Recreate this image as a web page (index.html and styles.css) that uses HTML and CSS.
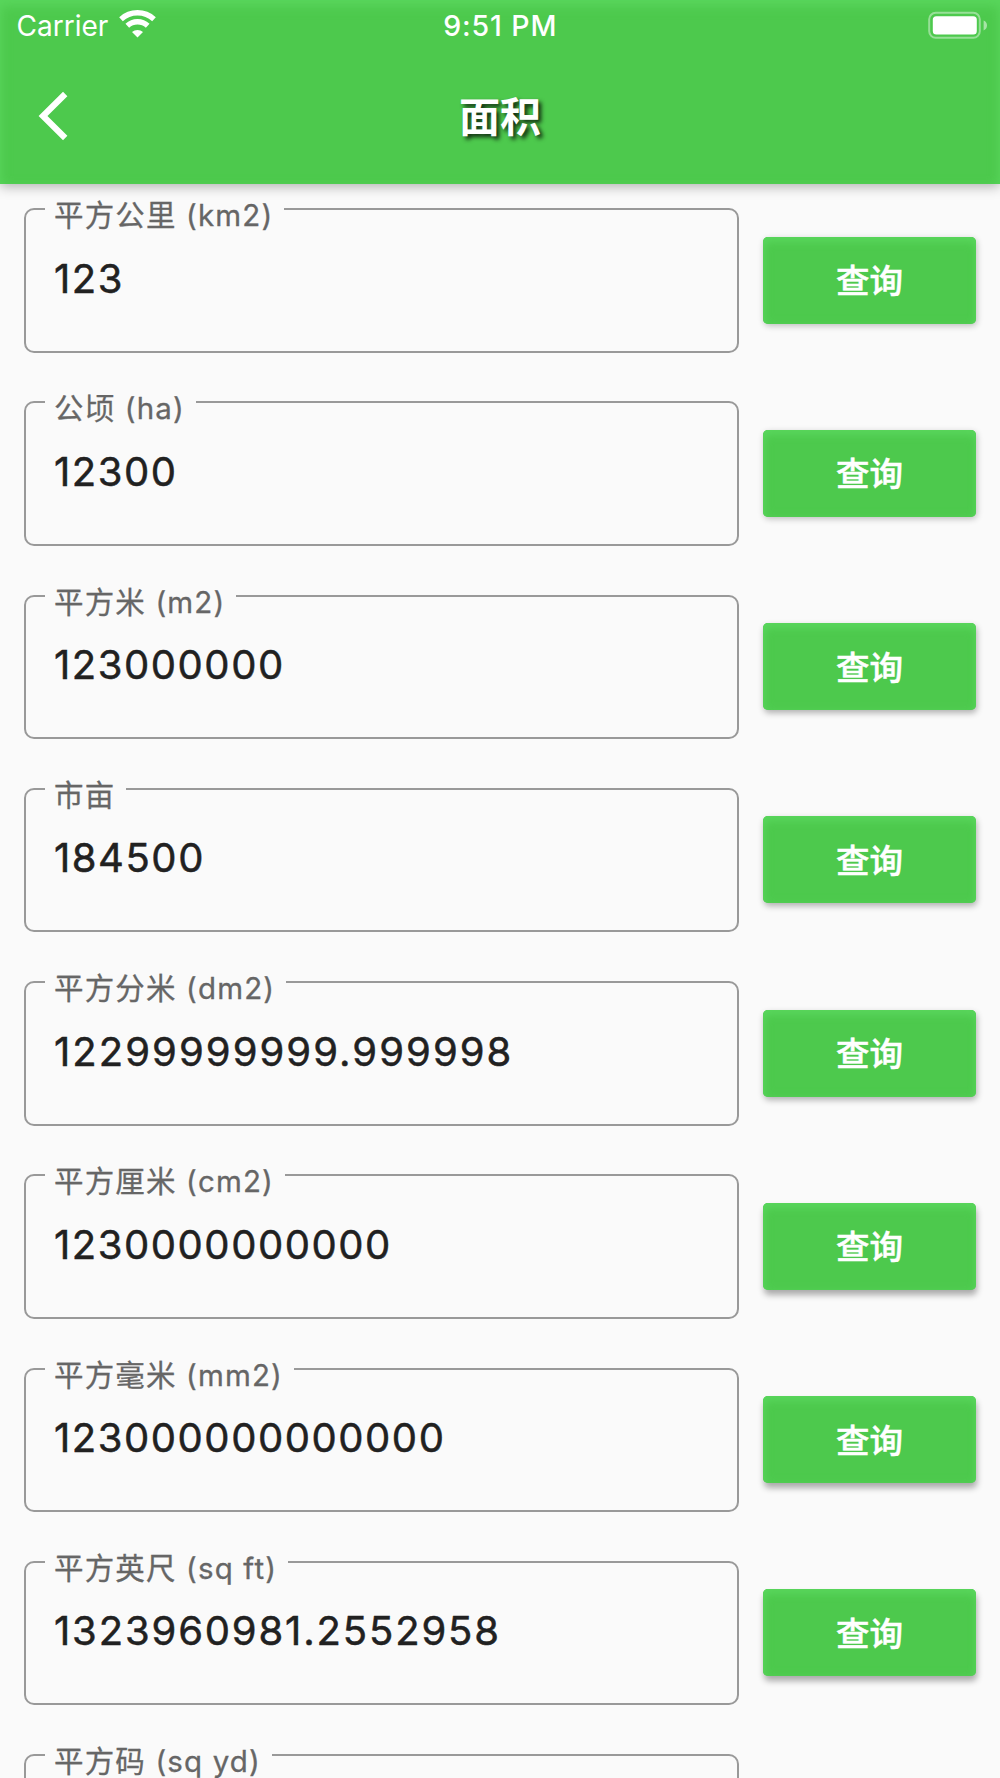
FILE: index.html
```html
<!DOCTYPE html>
<html lang="zh-CN">
<head>
<meta charset="utf-8">
<title>面积</title>
<link rel="stylesheet" href="styles.css">
</head>
<body>
<div class="screen">
  <header class="app-bar">
    <div class="status">
      <div class="status-left">
        <span class="carrier">Carrier</span>
        <svg class="wifi" width="37" height="28" viewBox="0 0 37 28" fill="none">
          <path d="M2 9.2A24.5 24.5 0 0 1 35 9.2" stroke="#fff" stroke-width="5.4"/>
          <path d="M8.3 15.8A15 15 0 0 1 28.7 15.8" stroke="#fff" stroke-width="5.4"/>
          <path d="M18.5 27.4L13 22A8.4 8.4 0 0 1 24 22Z" fill="#fff"/>
        </svg>
      </div>
      <span class="time">9:51 PM</span>
      <div class="status-right">
        <svg width="60" height="28" viewBox="0 0 60 28">
          <rect x="1.2" y="1.8" width="50.6" height="25" rx="6.5" fill="none" stroke="#fff" stroke-opacity=".42" stroke-width="2"/>
          <rect x="4.8" y="5.2" width="44" height="18.4" rx="3.5" fill="#fff"/>
          <path d="M55.6 9.6Q59 11 59 14.4T55.6 19.4Z" fill="#fff" fill-opacity=".5"/>
        </svg>
      </div>
    </div>
    <div class="nav">
      <svg class="back" width="32" height="52" viewBox="0 0 32 52" fill="none"><path d="M27.2 4L5 26L27.2 48" stroke="#fff" stroke-width="6.2"/></svg>
      <h1 class="title">面积</h1>
      <span></span>
    </div>
  </header>
  <main class="list">
    <div class="row"><fieldset class="field"><legend>平方公里 (km2)</legend><div class="value">123</div></fieldset><button class="query">查询</button></div>
    <div class="row"><fieldset class="field"><legend>公顷 (ha)</legend><div class="value">12300</div></fieldset><button class="query">查询</button></div>
    <div class="row"><fieldset class="field"><legend>平方米 (m2)</legend><div class="value">123000000</div></fieldset><button class="query">查询</button></div>
    <div class="row"><fieldset class="field"><legend>市亩</legend><div class="value">184500</div></fieldset><button class="query">查询</button></div>
    <div class="row"><fieldset class="field"><legend>平方分米 (dm2)</legend><div class="value value-loose">12299999999.999998</div></fieldset><button class="query">查询</button></div>
    <div class="row"><fieldset class="field"><legend>平方厘米 (cm2)</legend><div class="value">1230000000000</div></fieldset><button class="query">查询</button></div>
    <div class="row"><fieldset class="field"><legend>平方毫米 (mm2)</legend><div class="value">123000000000000</div></fieldset><button class="query">查询</button></div>
    <div class="row"><fieldset class="field"><legend>平方英尺 (sq ft)</legend><div class="value value-decimal">1323960981.2552958</div></fieldset><button class="query">查询</button></div>
    <div class="row"><fieldset class="field"><legend>平方码 (sq yd)</legend></fieldset></div>
  </main>
</div>
</body>
</html>
```
FILE: styles.css
```css
* { box-sizing: border-box; }
body {
  margin: 0;
  background: #fafafa;
  font-family: Inter, "Noto Sans CJK SC", sans-serif;
}
.screen {
  height: 1778px;
  overflow: hidden;
  display: flex;
  flex-direction: column;
}
.app-bar {
  flex: none;
  height: 183.5px;
  background: #4dc94d;
  color: #fff;
  box-shadow: inset 0 6px 12px #59d65c, inset 0 0 8px #52ce54, 0 2px 12px rgba(0, 0, 0, .32);
}
.status {
  height: 53px;
  display: grid;
  grid-template-columns: 1fr auto 1fr;
  align-items: center;
  padding: 0 12px 3px 16.5px;
}
.status-left { display: flex; align-items: center; gap: 11px; }
.status-right { display: flex; justify-content: flex-end; }
.carrier { padding-top: 2px; font-size: 28px; line-height: 48px; }
.wifi { margin-top: -2px; }
.time {
  padding-top: 2px;
  margin-right: 4px;
  font-size: 28.5px;
  font-weight: 500;
  line-height: 48px;
  letter-spacing: .9px;
}
.nav {
  height: 126px;
  display: grid;
  grid-template-columns: 1fr auto 1fr;
  align-items: center;
  padding: 0 38px;
}
.title {
  margin: 0;
  padding-top: 1px;
  font-size: 41px;
  line-height: 60px;
  font-weight: 700;
  text-shadow: 3px 3px 4px rgba(0, 0, 0, .8);
}
.list { padding: 2.5px 24px 0 24px; }
.row {
  height: 193.25px;
  display: flex;
  gap: 24px;
}
.field {
  flex: none;
  width: 715px;
  height: 166.5px;
  margin: 0;
  padding: 0 0 0 19px;
  border: 2px solid #999;
  border-radius: 10px;
}
.field legend {
  height: 46px;
  padding: 13px 11px 0 9px;
  font-size: 29.5px;
  line-height: 32px;
  letter-spacing: 1.15px;
  color: #666;
  -webkit-text-stroke: .3px #666;
}
.value {
  padding: 22.5px 0 0 9px;
  font-size: 40px;
  line-height: 48px;
  letter-spacing: 1.55px;
  color: #212121;
  -webkit-text-stroke: .5px #212121;
}
.value-loose { letter-spacing: 2.05px; }
.value-decimal { letter-spacing: 1.85px; }
.query {
  flex: none;
  width: 213px;
  height: 87px;
  margin: 50.5px 0 0;
  padding: 0 0 2px;
  border: 0;
  border-radius: 5px;
  background: #4dc94d;
  color: #fff;
  font: 500 33.5px/48px "Noto Sans CJK SC", sans-serif;
  -webkit-text-stroke: .5px #fff;
  box-shadow: inset 0 5px 9px #59d65c, inset 2px 0 8px #52ce54, 1px 3px 6px rgba(0, 0, 0, .3);
}
.row:nth-child(-n+2) .query {
  box-shadow: inset 0 5px 9px #59d65c, inset 2px 0 8px #52ce54, 1px 2px 6px rgba(0, 0, 0, .24);
}
.row:nth-child(n+6) .query {
  box-shadow: inset 0 5px 9px #59d65c, inset 2px 0 8px #52ce54, 1px 5px 6px rgba(0, 0, 0, .32);
}
```
